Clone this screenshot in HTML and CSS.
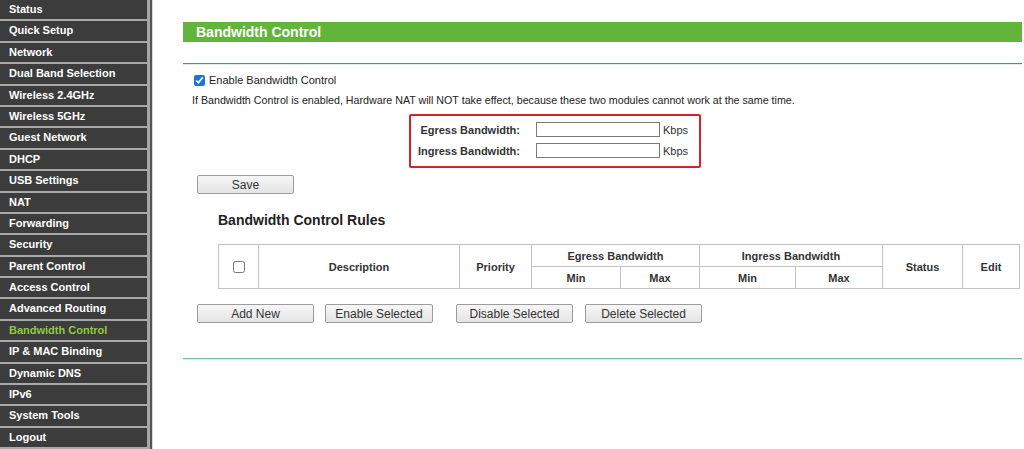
FILE: index.html
```html
<!DOCTYPE html>
<html lang="en">
<head>
    <meta charset="UTF-8">
    <title>Bandwidth Control</title>
    <link rel="stylesheet" href="styles.css">
</head>
<body>
    <div class="sidebar">
        <ul class="menu">
            <li>Status</li>
            <li>Quick Setup</li>
            <li>Network</li>
            <li>Dual Band Selection</li>
            <li>Wireless 2.4GHz</li>
            <li>Wireless 5GHz</li>
            <li>Guest Network</li>
            <li>DHCP</li>
            <li>USB Settings</li>
            <li>NAT</li>
            <li>Forwarding</li>
            <li>Security</li>
            <li>Parent Control</li>
            <li>Access Control</li>
            <li>Advanced Routing</li>
            <li class="active">Bandwidth Control</li>
            <li>IP &amp; MAC Binding</li>
            <li>Dynamic DNS</li>
            <li>IPv6</li>
            <li>System Tools</li>
            <li>Logout</li>
        </ul>
    </div>

    <div class="main">
        <div class="title-bar">Bandwidth Control</div>
        <div class="rule-line"></div>

        <!-- enable switch -->
        <label class="enable-row">
            <input type="checkbox" checked>
            <span>Enable Bandwidth Control</span>
        </label>
        <p class="note">If Bandwidth Control is enabled, Hardware NAT will NOT take effect, because these two modules cannot work at the same time.</p>

        <div class="bw-box">
            <label for="egress">Egress Bandwidth:</label>
            <input type="text" id="egress">
            <span>Kbps</span>
            <label for="ingress">Ingress Bandwidth:</label>
            <input type="text" id="ingress">
            <span>Kbps</span>
        </div>

        <button class="btn save-btn">Save</button>

        <h3 class="rules-title">Bandwidth Control Rules</h3>

        <table class="rules">
            <colgroup>
                <col style="width:40px">
                <col style="width:201px">
                <col style="width:72px">
                <col style="width:89px">
                <col style="width:79px">
                <col style="width:96px">
                <col style="width:87px">
                <col style="width:80px">
                <col style="width:57px">
            </colgroup>
            <tr>
                <th rowspan="2"><input type="checkbox"></th>
                <th rowspan="2">Description</th>
                <th rowspan="2">Priority</th>
                <th colspan="2">Egress Bandwidth</th>
                <th colspan="2">Ingress Bandwidth</th>
                <th rowspan="2">Status</th>
                <th rowspan="2">Edit</th>
            </tr>
            <tr>
                <th>Min</th>
                <th>Max</th>
                <th>Min</th>
                <th>Max</th>
            </tr>
        </table>

        <div class="actions">
            <button class="btn add-btn">Add New</button>
            <button class="btn enable-btn">Enable Selected</button>
            <button class="btn disable-btn">Disable Selected</button>
            <button class="btn delete-btn">Delete Selected</button>
        </div>

        <div class="bottom-line"></div>
    </div>
</body>
</html>
```

FILE: styles.css
```css
body {
    margin: 0;
    display: flex;
    height: 449px;
    overflow: hidden;
    background: #ffffff;
    font-family: 'Liberation Sans', Arial, sans-serif;
    color: #333333;
}
.sidebar {
    width: 147px;
    flex-shrink: 0;
    background: #3c3c3c;
    border-right: 3px solid #a6a6a6;
    box-shadow: 2px 0 0 #555555, 3px 0 0 #d8d8d8;
}
.menu {
    list-style: none;
    margin: 0;
    padding: 0;
}
.menu li {
    height: 19.4px;
    line-height: 19.4px;
    padding-left: 9px;
    border-bottom: 2px solid #a9a9a9;
    color: #ffffff;
    font-size: 11px;
    font-weight: bold;
    white-space: nowrap;
}
.menu li.active {
    color: #93c93f;
}
.main {
    width: 839px;
    padding-left: 33px;
}
.title-bar {
    margin-top: 22px;
    height: 20px;
    line-height: 20px;
    padding-left: 13px;
    background: #62b53a;
    color: #ffffff;
    font-size: 14px;
    font-weight: bold;
}
.rule-line {
    margin-top: 21px;
    height: 1px;
    background: #5f8a80;
    border-bottom: 1px solid #e3ece9;
}
.enable-row {
    display: flex;
    align-items: center;
    margin-top: 8px;
    margin-left: 10px;
    height: 14px;
    font-size: 11px;
    color: #222222;
}
.enable-row input {
    width: 11px;
    height: 11px;
    margin: 0 4px 0 1px;
    accent-color: #1e73d8;
}
.note {
    margin: 6px 0 0 9px;
    font-size: 10.7px;
    line-height: 14px;
    color: #222222;
}
.bw-box {
    display: grid;
    grid-template-columns: 107px 124px auto;
    column-gap: 16px;
    row-gap: 6px;
    align-items: center;
    width: 286px;
    margin: 7px 0 0 226px;
    padding: 6px 0 8px 2px;
    border: 2px solid #d2232a;
    border-radius: 2px;
    font-size: 11px;
}
.bw-box label {
    text-align: right;
    font-weight: bold;
    color: #333333;
}
.bw-box input {
    box-sizing: border-box;
    height: 15px;
    margin: 0;
    border: 1px solid #7a7a7a;
    background: #ffffff;
}
.bw-box span {
    margin-left: -13px;
}
.btn {
    height: 19px;
    padding: 0;
    border: 1px solid #9c9c9c;
    border-radius: 2px;
    background: linear-gradient(#f6f6f6, #e4e4e4);
    color: #333333;
    font-family: 'Liberation Sans', Arial, sans-serif;
    font-size: 12px;
    cursor: pointer;
}
.save-btn {
    display: block;
    width: 97px;
    margin: 7px 0 0 14px;
}
.rules-title {
    margin: 17px 0 0 35px;
    font-size: 14px;
    line-height: 18px;
    color: #222222;
}
.rules {
    margin: 15px 0 0 35px;
    border-collapse: collapse;
    table-layout: fixed;
    width: 801px;
}
.rules th {
    height: 21px;
    padding: 0;
    border: 1px solid #c2c2c2;
    font-size: 11px;
    color: #333333;
    text-align: center;
}
.rules th input {
    width: 12px;
    height: 12px;
    margin: 0;
    vertical-align: middle;
}
.actions {
    display: flex;
    margin: 15px 0 0 14px;
}
.add-btn {
    width: 117px;
    margin-right: 11px;
}
.enable-btn {
    width: 108px;
    margin-right: 23px;
}
.disable-btn {
    width: 117px;
    margin-right: 12px;
}
.delete-btn {
    width: 117px;
}
.bottom-line {
    margin-top: 35px;
    height: 1px;
    background: #7bb9a5;
    border-bottom: 1px solid #d5ebe3;
}
```
